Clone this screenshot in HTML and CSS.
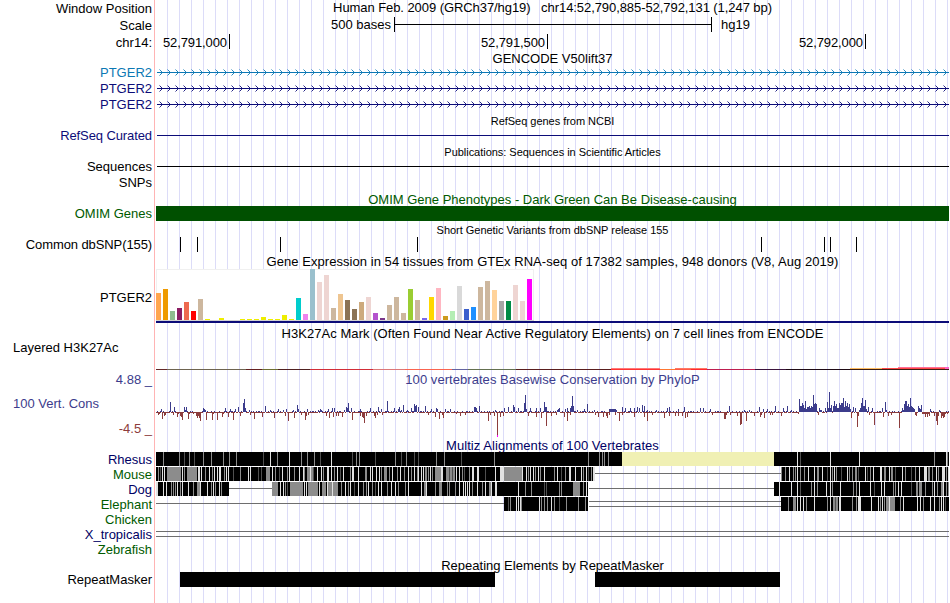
FILE: index.html
```
<!DOCTYPE html>
<html lang="en">
<head>
  <meta charset="UTF-8" />
  <title>Human chr14:52,790,885-52,792,131</title>
  <link rel="stylesheet" href="styles.css">
</head>
<body>
  <div class="browser">
    <div class="row head"><div class="label">Window Position</div><div class="title t-pos">Human Feb. 2009 (GRCh37/hg19) &nbsp; chr14:52,790,885-52,792,131 (1,247 bp)</div></div>
    <div class="row r17 head">
      <div class="label">Scale</div>
      <div class="scale"><span class="scale-size">500 bases</span><span class="scale-bar"></span><span class="scale-db">hg19</span></div>
    </div>
    <div class="row r17 head">
      <div class="label">chr14:</div>
      <div class="ruler"><span>52,791,000</span><span>52,791,500</span><span>52,792,000</span></div>
    </div>
    <div class="row r15"><div></div><div class="title">GENCODE V50lift37</div></div>
    <div class="row"><div class="label blue">PTGER2</div><svg class="track blue" data-track="gene"></svg></div>
    <div class="row"><div class="label navy">PTGER2</div><svg class="track navy" data-track="gene"></svg></div>
    <div class="row"><div class="label navy">PTGER2</div><svg class="track navy" data-track="gene"></svg></div>

    <div class="row r15"><div></div><div class="title small">RefSeq genes from NCBI</div></div>
    <div class="row"><div class="label navy tight">RefSeq Curated</div><svg class="track navy" data-track="line"></svg></div>
    <div class="row r15"><div></div><div class="title small">Publications: Sequences in Scientific Articles</div></div>
    <div class="row"><div class="label">Sequences</div><svg class="track" data-track="line"></svg></div>
    <div class="row"><div class="label">SNPs</div></div>

    <div class="row r15"><div></div><div class="title green">OMIM Gene Phenotypes - Dark Green Can Be Disease-causing</div></div>
    <div class="row"><div class="label green">OMIM Genes</div><div class="omim"></div></div>
    <div class="row r15"><div></div><div class="title small">Short Genetic Variants from dbSNP release 155</div></div>
    <div class="row"><div class="label tight">Common dbSNP(155)</div><svg class="track" data-track="snps"></svg></div>

    <div class="row"><div></div><div class="title wide">Gene Expression in 54 tissues from GTEx RNA-seq of 17382 samples, 948 donors (V8, Aug 2019)</div></div>
    <div class="row r-gtex"><div class="label">PTGER2</div><svg class="track" data-track="gtex"></svg></div>

    <div class="row"><div></div><div class="title wide">H3K27Ac Mark (Often Found Near Active Regulatory Elements) on 7 cell lines from ENCODE</div></div>
    <div class="row r-h3k"><div class="label left">Layered H3K27Ac</div><svg class="track" data-track="h3k"></svg></div>

    <div class="row r15"><div class="label slate">4.88 _</div><div class="title slate wide phylop-title">100 vertebrates Basewise Conservation by PhyloP</div></div>
    <div class="row r-cons">
      <div class="cons-labels"><div class="label left slate">100 Vert. Cons</div><div class="label maroon">-4.5 _</div></div>
      <svg class="track" data-track="phylop"></svg>
    </div>

    <div class="row r15"><div></div><div class="title navy2 wide">Multiz Alignments of 100 Vertebrates</div></div>
    <div class="row r15"><div class="label navy2">Rhesus</div><svg class="track" data-track="rhesus"></svg></div>
    <div class="row r15"><div class="label green">Mouse</div><svg class="track" data-track="mouse"></svg></div>
    <div class="row r15"><div class="label navy2">Dog</div><svg class="track" data-track="dog"></svg></div>
    <div class="row r15"><div class="label green">Elephant</div><svg class="track" data-track="elephant"></svg></div>
    <div class="row r15"><div class="label green">Chicken</div></div>
    <div class="row r15"><div class="label navy2">X_tropicalis</div><svg class="track" data-track="tropicalis"></svg></div>
    <div class="row r15"><div class="label green">Zebrafish</div></div>

    <div class="row r15"><div></div><div class="title">Repeating Elements by RepeatMasker</div></div>
    <div class="row"><div class="label">RepeatMasker</div><svg class="track" data-track="repeats"></svg></div>
  </div>
  <script src="tracks.js"></script>
</body>
</html>
```

FILE: styles.css
```
body {
  margin: 0;
  background: #fff;
  color: #000;
  font-family: "Liberation Sans", Arial, Helvetica, sans-serif;
  font-size: 13px;
}

/* red divider, plain label column, then a guide line every 12px */
.browser {
  width: 949px;
  height: 603px;
  overflow: hidden;
  background:
    linear-gradient(#ffb4b4, #ffb4b4) 154px 0 / 1px 100% no-repeat,
    linear-gradient(#fff, #fff) 0 0 / 156px 100% no-repeat,
    linear-gradient(to right, #dcdcf8 1px, transparent 1px) 11px 0 / 12px 100%;
}

.row {
  display: grid;
  grid-template-columns: 156px 793px;
  grid-template-rows: 100%;
  height: 16px;
  align-items: center;
  line-height: 16px;
}

.r15 { height: 15px; align-items: start; }
.r17 { height: 17px; }
.r-gtex { height: 56px; }
.r-h3k { height: 31px; align-items: start; }
.r-cons { height: 50px; align-items: start; }

.label {
  padding-right: 4px;
  text-align: right;
  white-space: pre;
}

.label.left {
  padding-left: 13px;
  text-align: left;
}

.head .label,
.r-gtex .label { padding-top: 2px; }

.r-h3k .label { line-height: 14px; }

.title {
  align-self: start;
  padding-top: 1px;
  text-align: center;
  white-space: nowrap;
}

.title.small {
  padding-top: 0;
  font-size: 11px;
  letter-spacing: -0.03px;
}

.title.t-pos {
  padding-top: 0;
  letter-spacing: -0.07px;
}

.title.phylop-title { padding-top: 0; }

.tight { letter-spacing: -0.1px; }
.wide { letter-spacing: 0.05px; }

.track {
  display: block;
  width: 793px;
  height: 100%;
  overflow: hidden;
  shape-rendering: crispEdges;
}

.blue { color: #0c78b4; }
.navy { color: #0c0c78; }
.navy2 { color: #000064; }
.green { color: #005a00; }
.slate { color: #3c3c8c; }
.maroon { color: #8c3c3c; }

.scale {
  display: flex;
  align-items: center;
}

.scale-size {
  width: 235px;
  margin-right: 3px;
  text-align: right;
}

.scale-bar {
  width: 316px;
  height: 15px;
  border-left: 1px solid #000;
  border-right: 1px solid #000;
  background: linear-gradient(#000, #000) 0 7px / 100% 1px no-repeat;
}

.scale-db { margin-left: 9px; }

.ruler {
  display: flex;
  letter-spacing: -0.1px;
}

.ruler span {
  box-sizing: border-box;
  width: 318px;
  height: 15px;
  padding-right: 2px;
  border-right: 1px solid #000;
  line-height: 17px;
  text-align: right;
}

.ruler span:first-child { width: 74px; }

.omim {
  height: 15px;
  margin-bottom: 1px;
  background: #005000;
}

.cons-labels {
  display: flex;
  flex-direction: column;
  justify-content: space-between;
  height: 41px;
  padding-top: 9px;
}
```

FILE: tracks.js
```
const START = 156;
const WIDTH = 793;

// x is always the column in the whole picture, y is relative to the row
function rect(svg, x, y, w, h, fill) {
  const r = document.createElementNS('http://www.w3.org/2000/svg', 'rect');
  r.setAttribute('x', x - START);
  r.setAttribute('y', y);
  r.setAttribute('width', w);
  r.setAttribute('height', h);
  r.setAttribute('fill', fill);
  svg.appendChild(r);
}

const snps = [180, 197, 280, 417, 761, 824, 830, 856];

const tissues = [
  [27, '#ffa54f'], [31, '#ee9a00'], [9, '#8fbc8f'], [12, '#8b1c62'], [18, '#ee6a50'], [9, '#ff0000'],
  [21, '#cdb79e'], [1, '#eeee00'], [0, '#eeee00'], [2, '#eeee00'], [0, '#eeee00'], [0, '#eeee00'],
  [1, '#eeee00'], [1, '#eeee00'], [1, '#eeee00'], [3, '#eeee00'], [1, '#eeee00'], [1, '#eeee00'],
  [5, '#eeee00'], [1, '#eeee00'], [22, '#00cdcd'], [6, '#ee82ee'], [51, '#9ac0cd'], [38, '#eed5d2'],
  [45, '#eed5d2'], [12, '#cdb79e'], [26, '#eec591'], [20, '#8b7355'], [11, '#8b7355'], [18, '#cdaa7d'],
  [23, '#eed5d2'], [7, '#b452cd'], [2, '#7a378b'], [15, '#cdb79e'], [23, '#cdb79e'], [7, '#cdb79e'],
  [31, '#9acd32'], [20, '#cdb79e'], [2, '#7a67ee'], [23, '#ffd700'], [32, '#ffb6c1'], [4, '#cd9b1d'],
  [9, '#b4eeb4'], [34, '#d9d9d9'], [11, '#3a5fcd'], [13, '#1e90ff'], [33, '#cdb79e'], [39, '#cdb79e'],
  [30, '#ffd39b'], [19, '#a6a6a6'], [19, '#008b45'], [35, '#eed5d2'], [19, '#eed5d2'], [41, '#ff00ff']
];

// [x, y, width, height, colour]
const h3k = [
  [156, 28, 11, 1, '#642828'], [167, 28, 79, 1, '#6e6450'], [246, 28, 16, 1, '#642020'],
  [262, 28, 16, 1, '#6e6e32'], [278, 28, 32, 1, '#502020'], [310, 28, 63, 1, '#d22d37'],
  [373, 28, 32, 1, '#dc7878'], [405, 28, 47, 1, '#fa6450'], [452, 28, 16, 1, '#6464a0'],
  [468, 28, 48, 1, '#647050'], [516, 28, 96, 1, '#5a1e1e'], [611, 27, 49, 1, '#ff7878'],
  [611, 28, 49, 1, '#ff3232'], [660, 28, 15, 1, '#ff7832'], [675, 27, 32, 1, '#ff7864'],
  [675, 28, 16, 1, '#ff5a46'], [691, 28, 16, 1, '#ff2832'], [707, 28, 48, 1, '#be1e50'],
  [755, 28, 31, 1, '#3c143c'], [786, 28, 64, 1, '#1e0a14'], [850, 27, 32, 1, '#ffbe64'],
  [850, 28, 99, 1, '#3c1e14'], [882, 27, 67, 1, '#ff4646'], [898, 26, 47, 1, '#ff6e96'],
  [945, 26, 4, 2, '#ff64c8']
];

const up = {
  161: 3, 170: 10, 174: 5, 184: 5, 185: 2, 186: 5, 203: 4, 204: 3, 205: 2, 225: 4, 230: 3, 235: 3, 238: 5,
  243: 9, 244: 13, 245: 4, 249: 2, 265: 6, 270: 2, 278: 3, 283: 2, 286: 3, 293: 2, 297: 7, 298: 3, 307: 3,
  318: 2, 320: 3, 321: 2, 328: 3, 332: 4, 334: 4, 344: 2, 346: 5, 347: 4, 348: 9, 351: 4, 360: 3, 370: 4,
  378: 5, 381: 3, 387: 11, 394: 4, 398: 3, 399: 5, 401: 2, 403: 7, 407: 2, 411: 4, 414: 8, 415: 6, 416: 7,
  418: 5, 425: 6, 431: 3, 436: 4, 437: 3, 445: 3, 450: 3, 474: 5, 475: 5, 476: 4, 479: 6, 495: 2, 504: 4,
  508: 5, 513: 7, 514: 5, 518: 4, 524: 9, 525: 17, 526: 3, 530: 4, 536: 4, 540: 4, 544: 10, 545: 5, 546: 5,
  557: 2, 558: 3, 559: 4, 565: 3, 567: 4, 570: 4, 571: 6, 572: 16, 573: 6, 577: 2, 584: 3, 587: 8, 594: 2,
  609: 3, 610: 3, 611: 3, 612: 3, 613: 3, 614: 3, 615: 3, 616: 2, 622: 5, 625: 4, 630: 4, 634: 4, 637: 5,
  639: 4, 642: 7, 644: 6, 647: 2, 656: 2, 667: 4, 669: 5, 678: 3, 684: 5, 700: 4, 703: 4, 710: 3, 729: 6,
  744: 2, 749: 2, 759: 5, 763: 3, 767: 3, 775: 6, 783: 4, 787: 6, 791: 2, 799: 13, 800: 6, 801: 6, 802: 9,
  803: 7, 804: 4, 805: 11, 806: 3, 807: 5, 808: 5, 809: 6, 810: 4, 811: 6, 812: 5, 813: 17, 814: 8, 815: 9,
  816: 8, 819: 4, 820: 2, 821: 2, 825: 4, 827: 10, 828: 4, 829: 20, 830: 4, 831: 7, 833: 6, 834: 11, 835: 6,
  836: 8, 837: 4, 838: 4, 839: 9, 840: 7, 841: 9, 842: 9, 843: 14, 844: 5, 845: 11, 846: 6, 847: 9, 848: 5,
  849: 8, 850: 3, 853: 5, 855: 4, 859: 2, 860: 4, 861: 9, 862: 14, 863: 6, 864: 6, 865: 12, 866: 3, 868: 5,
  872: 4, 882: 4, 885: 10, 886: 2, 902: 4, 903: 2, 904: 8, 905: 11, 906: 11, 907: 6, 908: 8, 909: 5, 910: 14,
  911: 6, 912: 5, 913: 4, 914: 3, 918: 6, 919: 4, 920: 3, 921: 7, 930: 3, 939: 2
};

const down = {
  158: 3, 159: 2, 162: 7, 164: 4, 165: 3, 173: 3, 177: 5, 178: 2, 180: 4, 181: 5, 182: 8, 188: 7, 189: 2,
  193: 2, 196: 4, 197: 6, 198: 4, 199: 6, 200: 9, 206: 8, 212: 8, 213: 2, 217: 8, 222: 5, 223: 2, 228: 5,
  233: 8, 240: 4, 250: 3, 254: 7, 262: 5, 274: 6, 285: 4, 288: 9, 294: 6, 301: 3, 305: 8, 306: 4, 308: 3,
  326: 4, 329: 6, 333: 5, 336: 4, 338: 4, 342: 5, 352: 8, 360: 4, 362: 5, 363: 6, 364: 11, 366: 4, 374: 4,
  375: 6, 377: 3, 382: 3, 428: 3, 435: 5, 439: 7, 442: 3, 443: 6, 456: 2, 460: 4, 465: 3, 488: 9, 490: 3,
  494: 4, 497: 24, 500: 5, 503: 4, 528: 4, 536: 5, 541: 6, 546: 14, 551: 4, 556: 3, 564: 5, 567: 9, 570: 3,
  595: 3, 598: 5, 603: 5, 606: 4, 607: 6, 609: 3, 615: 3, 619: 9, 622: 3, 634: 5, 644: 5, 647: 9, 652: 3,
  664: 6, 669: 4, 675: 4, 678: 4, 682: 4, 685: 6, 687: 5, 712: 3, 724: 7, 725: 7, 726: 3, 730: 3, 737: 4,
  740: 13, 741: 12, 746: 9, 754: 4, 760: 5, 761: 3, 764: 6, 770: 3, 772: 3, 781: 4, 798: 2, 818: 3, 851: 6,
  857: 15, 858: 4, 869: 3, 874: 13, 883: 5, 888: 4, 891: 3, 899: 16, 915: 3, 916: 4, 922: 2, 923: 2, 924: 2,
  925: 5, 926: 2, 927: 5, 928: 2, 929: 4, 934: 4, 936: 9, 937: 13, 938: 4, 941: 6, 942: 4, 943: 6, 944: 5,
  945: 2, 947: 2
};

// blocks are solid sequence, gaps are [x, width, y...] lines,
// stripes are "x" or "x+width" in dark, mid and light grey
const alignments = {
  rhesus: {
    blocks: [[156, 466], [774, 175]],
    gaps: [],
    dark: '184 194 263 320 352 375 401 414 418 461 800',
    mid: '163 179 189 203 211 223 229 236 277 301 307 314 356 359 395 406 436 444 494 588 599 602 604 608 934 947',
    light: '270 289 331 797 830 859 946'
  },
  mouse: {
    blocks: [[156, 439], [781, 168]],
    gaps: [[595, 186, 6]],
    mid: '158 167+14 184 187+10 205 212 224 240 266+4 275 287 294 304 307+6 323 334 350 365+2 381 384+3 389 397 404 411 417 425+2 428 432 435+6 446+9 462 469 504+18 528 535 540 554 565 583 591 781 785 793 795 800 804 817+2 832 836 849 852 855+2 870 884+2 891+2 905 915 928+2 932 938 946',
    light: '162 164 182 198 199 201 209 214 217 219+2 226 228 248 250 272 282 289 299 303 310 317 321 327+2 331 337 343 352+2 358 370 372 376 379 392 400 408 414 418 421 423 430 441+2 456 459 472+2 477+2 495 500+4 522 526 530 533 538 544 557 569+2 575 581 586 593+2 789 797 808 814 822 830 834 847 865 873 880+2 889 902 919 924+3 936 942+2 944 948',
    dark: '160 233 258 261 279 313 340 449 452 464 485 561 588 827 841 858 867 895 911'
  },
  dog: {
    blocks: [[156, 73], [272, 316], [774, 175]],
    gaps: [[229, 43, 6], [589, 185, 6]],
    mid: '171 173 175 180 193 197+3 211 215 221 272+6 285 290+13 308+10 322+4 328+4 333+5 341 348 363 366 372 387 398 405 424+2 435 439+3 447 449 455 472 482 489+2 525 531 559 561 573+7 583 811 817 832 853 856 893 895 916+2 919+3 925 932 937 941+2 946 948',
    light: '156+2 163 166 177 182 188 200 207 213 219 280 283 304 306 319 327 332 345 350 358 368 378 381 391 395 408 421 426 459 463 465 467 469 477 485 491 495+2 518 586 779 791 797 814 826 830 840 859 870 881 884 898 901 934 943',
    dark: '287 354 375 544 546 800 874 911'
  },
  elephant: {
    blocks: [[504, 84], [781, 168]],
    gaps: [[156, 348, 6], [589, 192, 4, 9]],
    mid: '510 521 541 544 547 554 566 578 585 788 793+3 806 827 833+5 852 856 880 884 886 887+8 900 923 939',
    light: '516 518 520 539 551 797 800 803 814 830 839+2 858+3 871 878 882 889 903 917 920 930 934 941 943',
    dark: '508 559 835 945'
  },
  tropicalis: {
    blocks: [],
    gaps: [[156, 793, 4, 9]],
    dark: '', mid: '', light: ''
  }
};

function drawAlignment(svg, a) {
  const shades = { dark: '#505050', mid: '#8c8c8c', light: '#e1e1e1' };
  a.gaps.forEach(([x, w, ...ys]) => ys.forEach(y => rect(svg, x, y, w, 1, '#6e6e6e')));
  a.blocks.forEach(([x, w]) => rect(svg, x, 0, w, 14, '#000'));
  for (const shade of ['mid', 'light', 'dark']) {
    a[shade].split(' ').filter(Boolean).forEach(s => {
      const [x, w] = s.split('+').map(Number);
      rect(svg, x, 0, w || 1, 14, shades[shade]);
    });
  }
}

const draw = {
  gene(svg) {
    rect(svg, 157, 7, 792, 1, 'currentColor');
    let d = '';
    for (let x = 3.5; x < WIDTH; x += 8) {
      d += `M${x} 4.5l3 3l-3 3`;
    }
    const p = document.createElementNS('http://www.w3.org/2000/svg', 'path');
    p.setAttribute('d', d);
    p.setAttribute('fill', 'none');
    p.setAttribute('stroke', 'currentColor');
    p.setAttribute('stroke-width', '0.9');
    p.setAttribute('shape-rendering', 'auto');
    svg.appendChild(p);
  },
  line(svg) {
    rect(svg, 157, 7, 792, 1, 'currentColor');
  },
  snps(svg) {
    snps.forEach(x => rect(svg, x, 0, 1, 15, '#000'));
  },
  gtex(svg) {
    rect(svg, 156, 0, 378, 52, '#f0f0f0');
    rect(svg, 157, 1, 376, 50, '#fff');
    rect(svg, 156, 51, 378, 1, '#d2d2d2');
    tissues.forEach(([h, c], i) => rect(svg, 156 + i * 7, 51 - h, 5, h, c));
    rect(svg, 156, 52, 793, 2, '#0c0c78');
  },
  h3k(svg) {
    h3k.forEach(b => rect(svg, ...b));
  },
  phylop(svg) {
    const base = '-+--+--+-+---++-+--+-++-+--';
    for (let x = START; x < START + WIDTH; x++) {
      const sign = base[(x - START) % base.length];
      const u = up[x] || (!down[x] && sign === '+' ? 1 : 0);
      const d = down[x] || (!up[x] ? 1 : 0);
      rect(svg, x, 25 - u, 1, u, '#3c3c8c');
      rect(svg, x, 25, 1, d, '#8c3c3c');
    }
    rect(svg, 497, 48, 1, 2, '#ff00ff');
  },
  rhesus(svg) {
    drawAlignment(svg, alignments.rhesus);
    rect(svg, 622, 0, 152, 14, '#f0f0b4');
  },
  mouse(svg) { drawAlignment(svg, alignments.mouse); },
  dog(svg) { drawAlignment(svg, alignments.dog); },
  elephant(svg) { drawAlignment(svg, alignments.elephant); },
  tropicalis(svg) { drawAlignment(svg, alignments.tropicalis); },
  repeats(svg) {
    rect(svg, 180, 0, 315, 15, '#000');
    rect(svg, 595, 0, 185, 15, '#000');
  }
};

document.querySelectorAll('svg[data-track]').forEach(svg => draw[svg.dataset.track](svg));
```
